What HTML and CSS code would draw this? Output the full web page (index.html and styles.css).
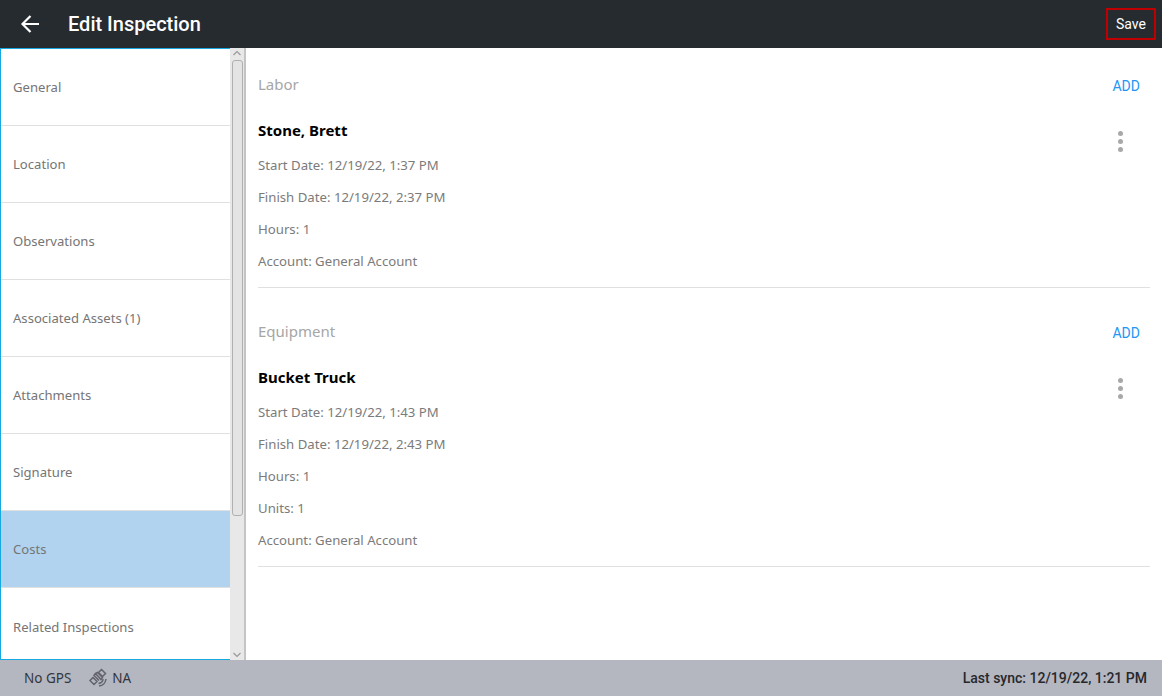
FILE: index.html
```
<!DOCTYPE html>
<html lang="en">
<head>
<meta charset="utf-8">
<title>Edit Inspection</title>
<link rel="stylesheet" href="styles.css">
</head>
<body>
<div class="app">
  <header class="topbar">
    <svg class="back" width="24" height="24" viewBox="0 0 24 24"><path d="M21 12H4.500M12.500 4l-8 8 8 8" fill="none" stroke="#fff" stroke-width="2.200"/></svg>
    <h1 class="title">Edit Inspection</h1>
    <button class="save">Save</button>
  </header>
  <div class="middle">
    <aside class="side">
      <nav class="nav">
        <div class="nav-item">General</div>
        <div class="nav-item">Location</div>
        <div class="nav-item">Observations</div>
        <div class="nav-item">Associated Assets (1)</div>
        <div class="nav-item">Attachments</div>
        <div class="nav-item">Signature</div>
        <div class="nav-item active">Costs</div>
        <div class="nav-item last">Related Inspections</div>
      </nav>
      <div class="scrollbar">
        <svg class="arrow" width="14" height="12" viewBox="0 0 14 12"><path d="M3.500 7L7 3.500 10.500 7" fill="none" stroke="#9a9a9a" stroke-width="1.200"/></svg>
        <div class="track"><div class="thumb"></div></div>
        <svg class="arrow" width="14" height="11" viewBox="0 0 14 11"><path d="M3.500 4L7 7.500 10.500 4" fill="none" stroke="#9a9a9a" stroke-width="1.200"/></svg>
      </div>
    </aside>
    <main class="main">
      <section class="section">
        <div class="section-head"><h2 class="section-title">Labor</h2><span class="add">ADD</span></div>
        <div class="entry">
          <div class="entry-body">
            <div class="name">Stone, Brett</div>
            <div class="line">Start Date: 12/19/22, 1:37 PM</div>
            <div class="line">Finish Date: 12/19/22, 2:37 PM</div>
            <div class="line">Hours: 1</div>
            <div class="line">Account: General Account</div>
          </div>
          <div class="dots"><i></i><i></i><i></i></div>
        </div>
      </section>
      <section class="section">
        <div class="section-head"><h2 class="section-title">Equipment</h2><span class="add">ADD</span></div>
        <div class="entry">
          <div class="entry-body">
            <div class="name">Bucket Truck</div>
            <div class="line">Start Date: 12/19/22, 1:43 PM</div>
            <div class="line">Finish Date: 12/19/22, 2:43 PM</div>
            <div class="line">Hours: 1</div>
            <div class="line">Units: 1</div>
            <div class="line">Account: General Account</div>
          </div>
          <div class="dots"><i></i><i></i><i></i></div>
        </div>
      </section>
    </main>
  </div>
  <footer class="status">
    <span class="gps">No GPS</span>
    <svg class="sat" width="20" height="20" viewBox="0 0 20 20" fill="none" stroke="#62636b" stroke-width="1.500">
      <path d="M13.500 1.500l4 4-3 3-4-4zM5 9.500l4 4-3 3-4-4zM7.500 5.500l2-1 5 5-1.500 2zM7.500 5.500l-1.500 2 5 5"/>
      <path d="M11 18c3.500-.3 6.500-3 7-7M10.500 15.500c2.200-.2 4.200-2 4.700-4.300"/>
    </svg>
    <span class="na">NA</span>
    <span class="sync">Last sync: 12/19/22, 1:21 PM</span>
  </footer>
</div>
</body>
</html>
```
FILE: styles.css
```
* { box-sizing: border-box; }
html, body { margin: 0; height: 100%; overflow: hidden; }
body { font-family: Roboto, "Liberation Sans", sans-serif; background: #fff; }
.app { display: flex; flex-direction: column; width: 1162px; height: 696px; }
.topbar { display: flex; align-items: center; height: 48px; flex: none; background: #262b30; padding: 0 6px 0 18px; }
.back { flex: none; }
.title { margin: 0 0 0 26px; flex: 1; font-size: 20px; font-weight: 500; color: #fff; }
.save { width: 50px; height: 32px; padding: 0; background: transparent; border: 2px solid #c00000; color: #fff; font: 400 14px Roboto, sans-serif; }
.middle { display: flex; flex: none; height: 612px; }
.side { display: flex; width: 246px; flex: none; border-right: 2px solid #c4c4c4; }
.nav { width: 230px; flex: none; overflow: hidden; border: 1px solid #16a9e0; border-right: 0; }
.nav-item { display: flex; align-items: center; height: 77px; padding-left: 12px; font-family: "Noto Sans", sans-serif; font-size: 13.1px; color: #757575; border-bottom: 1px solid #e0e0e0; }
.nav-item.active { background: #b1d3ef; }
.nav-item.last { border-bottom: 0; }
.scrollbar { display: flex; flex-direction: column; width: 14px; flex: none; background: #e8e8e8; }
.arrow { flex: none; }
.track { flex: 1; padding: 0 1px 0 2px; }
.thumb { height: 456px; background: #e4e4e4; border: 1px solid #b0b0b0; border-radius: 3px; }
.main { flex: 1; padding: 0 12px; }
.section { border-bottom: 1px solid #e0e0e0; padding-bottom: 10px; margin-bottom: 31px; }
.section:first-child { padding-top: 24px; }
.section-head { display: flex; justify-content: space-between; align-items: center; height: 24px; padding-right: 10px; }
.section-title { margin: 0; font-family: "Noto Sans", sans-serif; font-size: 15px; font-weight: 400; color: #a6a6a6; }
.add { font-size: 14px; color: #2196f3; position: relative; top: 2px; }
.entry { display: flex; justify-content: space-between; padding-top: 22px; }
.name { font-family: "Noto Sans", sans-serif; font-size: 15px; font-weight: 700; color: #000; line-height: 24px; margin-bottom: 7px; }
.line { font-family: "Noto Sans", sans-serif; font-size: 13.2px; line-height: 32px; color: #7b7b7b; }
.dots { display: flex; flex-direction: column; gap: 3px; margin: 13px 27px 0 0; }
.dots i { width: 5px; height: 5px; border-radius: 50%; background: #a8a8a8; }
.status { display: flex; align-items: center; flex: 1; background: #b4b6c0; padding: 0 15px 0 24px; font-family: "Noto Sans", sans-serif; font-size: 13.5px; color: #33363c; }
.sat { margin-left: 17px; }
.na { margin-left: 4px; flex: 1; }
.sync { font-family: Roboto, sans-serif; font-size: 14px; font-weight: 500; color: #26282c; }
```
